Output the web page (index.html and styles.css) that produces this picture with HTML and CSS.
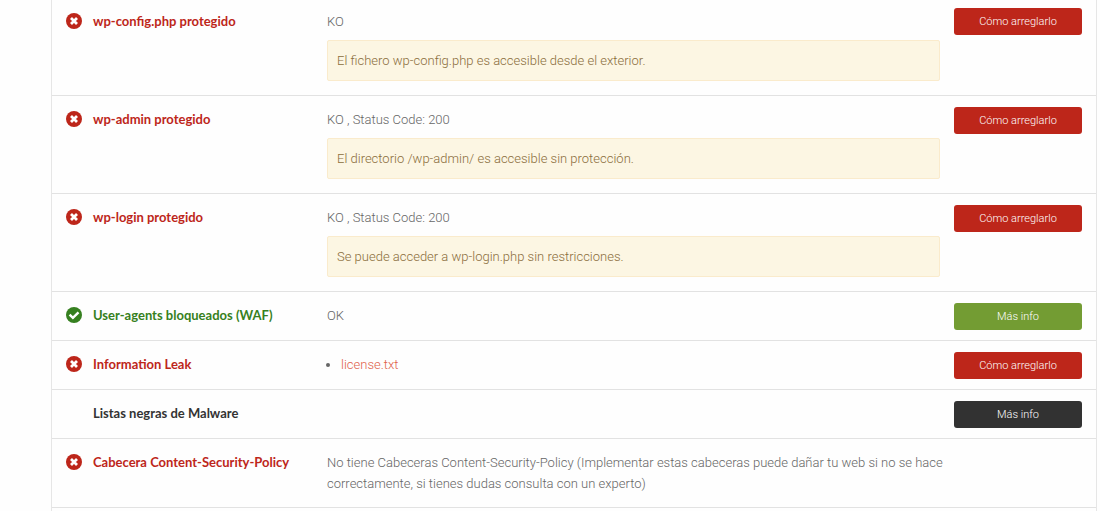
FILE: index.html
```html
<!DOCTYPE html>
<html lang="es">
<head>
<meta charset="UTF-8">
<meta name="viewport" content="width=device-width, initial-scale=1.0">
<title>Seguridad</title>
<link rel="stylesheet" href="styles.css">
</head>
<body>

<!-- iconos de estado -->
<svg class="sprite" aria-hidden="true">
  <symbol id="icon-ko" viewBox="0 0 16 16">
    <circle cx="8" cy="8" r="8" fill="currentColor"/>
    <path d="M5 5l6 6M11 5l-6 6" stroke="#fff" stroke-width="2.8"/>
  </symbol>
  <symbol id="icon-ok" viewBox="0 0 16 16">
    <circle cx="8" cy="8" r="8" fill="currentColor"/>
    <path d="M3.6 7.6l3.3 3.3 5.6-5.6" fill="none" stroke="#fff" stroke-width="2.4"/>
  </symbol>
</svg>

<div class="panel">
  <table class="checks">
    <colgroup>
      <col class="col-icon">
      <col class="col-name">
      <col>
      <col class="col-action">
    </colgroup>
    <tbody>
      <tr class="ko">
        <td class="status"><svg class="icon"><use href="#icon-ko"/></svg></td>
        <th scope="row">wp-config.php protegido</th>
        <td class="result">
          KO
          <div class="alert">El fichero wp-config.php es accesible desde el exterior.</div>
        </td>
        <td class="action"><button type="button" class="btn btn-danger">Cómo arreglarlo</button></td>
      </tr>
      <tr class="ko">
        <td class="status"><svg class="icon"><use href="#icon-ko"/></svg></td>
        <th scope="row">wp-admin protegido</th>
        <td class="result">
          KO , Status Code: 200
          <div class="alert">El directorio /wp-admin/ es accesible sin protección.</div>
        </td>
        <td class="action"><button type="button" class="btn btn-danger">Cómo arreglarlo</button></td>
      </tr>
      <tr class="ko">
        <td class="status"><svg class="icon"><use href="#icon-ko"/></svg></td>
        <th scope="row">wp-login protegido</th>
        <td class="result">
          KO , Status Code: 200
          <div class="alert">Se puede acceder a wp-login.php sin restricciones.</div>
        </td>
        <td class="action"><button type="button" class="btn btn-danger">Cómo arreglarlo</button></td>
      </tr>
      <tr class="ok">
        <td class="status"><svg class="icon"><use href="#icon-ok"/></svg></td>
        <th scope="row">User-agents bloqueados (WAF)</th>
        <td class="result">OK</td>
        <td class="action"><button type="button" class="btn btn-success">Más info</button></td>
      </tr>
      <tr class="ko">
        <td class="status"><svg class="icon"><use href="#icon-ko"/></svg></td>
        <th scope="row">Information Leak</th>
        <td class="result">
          <ul class="files">
            <li><a href="#">license.txt</a></li>
          </ul>
        </td>
        <td class="action"><button type="button" class="btn btn-danger">Cómo arreglarlo</button></td>
      </tr>
      <tr>
        <td class="status"></td>
        <th scope="row">Listas negras de Malware</th>
        <td class="result"></td>
        <td class="action"><button type="button" class="btn btn-dark">Más info</button></td>
      </tr>
      <tr class="ko">
        <td class="status"><svg class="icon"><use href="#icon-ko"/></svg></td>
        <th scope="row">Cabecera Content-Security-Policy</th>
        <td class="result">No tiene Cabeceras Content-Security-Policy (Implementar estas cabeceras puede dañar tu web si no se hace correctamente, si tienes dudas consulta con un experto)</td>
        <td class="action"></td>
      </tr>
    </tbody>
  </table>
</div>

</body>
</html>
```
FILE: styles.css
```css
body {
  margin: 0;
  background-color: #fefefe;
  color: #666;
  font-family: Roboto, "Liberation Sans", sans-serif;
  font-size: 13px;
  font-weight: 300;
  line-height: 21px;
}
.sprite {
  display: none;
}
.panel {
  margin: 0 3px 0 51px;
  min-height: 100vh;
  border: solid #e6e6e6;
  border-width: 0 1px;
}
.checks {
  width: 100%;
  table-layout: fixed;
  border-spacing: 0;
}
.col-icon {
  width: 34px;
}
.col-name {
  width: 234px;
}
.col-action {
  width: 149px;
}
.checks th,
.checks td {
  padding: 13px 7px;
  border-bottom: 1px solid #e2e2e2;
  text-align: left;
  vertical-align: top;
}
.checks th {
  color: #333;
  font-family: Lato, sans-serif;
  font-weight: 700;
}
.checks .status {
  padding-left: 14px;
  padding-right: 0;
}
.checks .result {
  padding-right: 0;
}
.checks .action {
  padding: 11px 14px 10px 7px;
}
/* la primera fila va pegada al borde superior */
.checks tr:first-child th,
.checks tr:first-child td {
  padding-top: 11px;
}
.checks tr:first-child .action {
  padding-top: 8px;
}
.checks .ko th,
.ko .icon {
  color: #bd261a;
}
.checks .ok th,
.ok .icon {
  color: #368020;
}
.icon {
  display: block;
  width: 16px;
  height: 16px;
  margin-top: 2px;
}
.alert {
  margin: 8px 7px 1px 0;
  padding: 9px;
  border: 1px solid #faebcc;
  border-radius: 2px;
  background-color: #fcf6e3;
  color: #8a6d3b;
}
.files {
  margin: 0;
  padding-left: 14px;
}
.files a {
  color: #e0604a;
  text-decoration: none;
}
.btn {
  display: block;
  width: 100%;
  height: 27px;
  padding: 0;
  border: none;
  border-radius: 3px;
  color: white;
  font-family: inherit;
  font-size: 11px;
  font-weight: 300;
  cursor: pointer;
}
.btn-danger {
  background-color: #bd261a;
}
.btn-success {
  background-color: #739c33;
}
.btn-dark {
  background-color: #323232;
}
```
